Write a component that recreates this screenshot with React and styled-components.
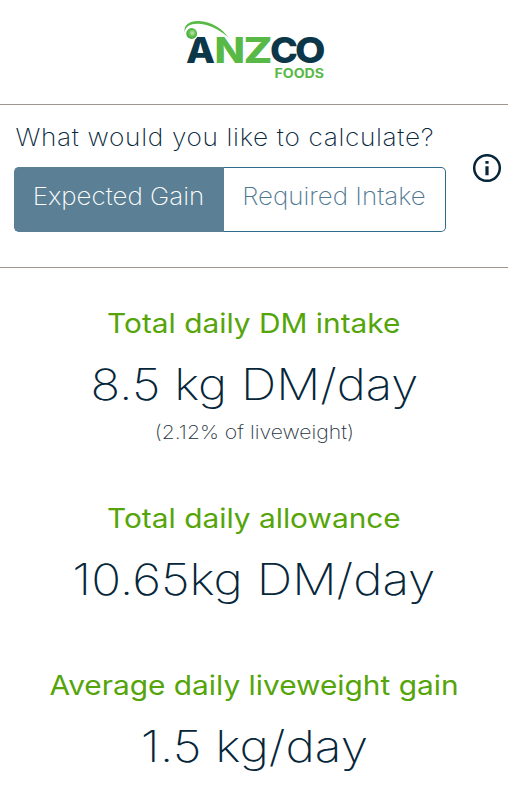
import React, { useState } from 'react';
import styled, { createGlobalStyle } from 'styled-components';

const GlobalStyle = createGlobalStyle`
    body {
        margin: 0;
        background: #fff;
        color: #06263a;
        font-family: Inter, "Liberation Sans", sans-serif;
    }
`;

const Page = styled.div`
    width: 508px;
    height: 800px;
    overflow: hidden;
`;

const Header = styled.header`
    display: flex;
    justify-content: center;
    box-sizing: border-box;
    height: 105px;
    padding-top: 10px;
    border-bottom: 1px solid #a0968d;
`;

const ModePanel = styled.section`
    display: flex;
    justify-content: space-between;
    box-sizing: border-box;
    height: 163px;
    padding: 14px 7px 0 14px;
    border-bottom: 1px solid #a0968d;
`;

const Wide = styled.span`
    display: inline-block;
    transform: scaleX(${({ $scale }) => $scale});
    transform-origin: ${({ $origin }) => $origin || 'center'};
`;

const Question = styled.div`
    width: 432px;
    height: 36px;
    margin-bottom: 12px;
    font-size: 24px;
    line-height: 37px;
    font-weight: 250;
    letter-spacing: 0.6px;
    text-indent: 0.5px;
    white-space: nowrap;
`;

const Toggle = styled.div`
    display: flex;
    width: 432px;
    height: 65px;
`;

const ToggleButton = styled.button`
    box-sizing: border-box;
    flex: 0 0 ${({ $width }) => $width}px;
    padding: 0 2px 6px 0;
    border: 1px solid ${({ $active }) => ($active ? '#5b7f94' : '#2f6c8b')};
    background: ${({ $active }) => ($active ? '#5b7f94' : '#fff')};
    color: ${({ $active }) => ($active ? '#fff' : '#4f7891')};
    font: 250 24px Inter, "Liberation Sans", sans-serif;
    white-space: nowrap;

    &:first-child {
        border-right: 0;
        border-radius: 5px 0 0 5px;
    }

    &:last-child {
        border-left: 0;
        border-radius: 0 5px 5px 0;
    }
`;

const InfoButton = styled.button`
    width: 28px;
    height: 28px;
    margin-top: 35px;
    padding: 0;
    border: 0;
    background: none;
`;

const Results = styled.main`
    padding-top: 36px;
`;

const Result = styled.section`
    display: flex;
    flex-direction: column;
    align-items: center;
    height: ${({ $height }) => $height}px;
    white-space: nowrap;
`;

const ResultTitle = styled.h2`
    margin: 0;
    color: #55a50a;
    font-size: 27px;
    line-height: 40px;
    font-weight: 400;
`;

const ResultValue = styled.div`
    margin-top: 10px;
    font-size: 43px;
    line-height: 60px;
    font-weight: 200;
`;

const ResultNote = styled.div`
    margin-top: 5px;
    color: #26333e;
    font-size: 19px;
    line-height: 28px;
    font-weight: 200;
`;

const results = [
    {
        title: 'Total daily DM intake',
        value: '8.5 kg DM/day',
        note: '(2.12% of liveweight)',
        valueScale: 1.143,
        height: 195,
    },
    {
        title: 'Total daily allowance',
        value: '10.65kg DM/day',
        valueScale: 1.15,
        height: 167,
    },
    {
        title: 'Average daily liveweight gain',
        value: '1.5 kg/day',
        valueScale: 1.155,
        height: 120,
    },
];

const modes = [
    { label: 'Expected Gain', width: 210 },
    { label: 'Required Intake', width: 222 },
];

const Logo = () => (
    <svg width="160" height="80" viewBox="0 0 160 80" fontFamily="Inter, sans-serif" fontWeight="800">
        <defs>
            <radialGradient id="ball" cx="0.55" cy="0.45" r="0.6">
                <stop offset="0" stopColor="#c5e8ad" />
                <stop offset="0.6" stopColor="#58b947" />
                <stop offset="1" stopColor="#3faa39" />
            </radialGradient>
        </defs>
        <g fontSize="35.6">
            <text x="12" y="52.7" textLength="29" lengthAdjust="spacingAndGlyphs" fill="#0b3748">A</text>
            <text x="40.5" y="52.7" textLength="30.5" lengthAdjust="spacingAndGlyphs" fill="#58b947">N</text>
            <text x="69.5" y="52.7" textLength="29" lengthAdjust="spacingAndGlyphs" fill="#58b947">Z</text>
            <text x="96" y="52.7" textLength="28" lengthAdjust="spacingAndGlyphs" fill="#0b3748">C</text>
            <text x="121" y="52.7" textLength="30.5" lengthAdjust="spacingAndGlyphs" fill="#0b3748">O</text>
        </g>
        <circle cx="17.7" cy="23.5" r="6.7" fill="#fff" />
        <circle cx="17.7" cy="23.5" r="5.4" fill="url(#ball)" />
        <path d="M10.5 22C10 15 15 10.8 25 11.1C37 11.5 48 18.5 54.5 27.5C45 19.5 35 14.4 25 13.8C17 13.2 12 16 10.5 22Z" fill="#58b947" />
        <text x="100.5" y="67.7" fontSize="12.8" fontWeight="700" textLength="49.5" lengthAdjust="spacingAndGlyphs" fill="#58b947">FOODS</text>
    </svg>
);

const InfoIcon = () => (
    <svg width="28" height="28" viewBox="0 0 28 28">
        <circle cx="14" cy="14" r="12.8" fill="none" stroke="#06263a" strokeWidth="2.5" />
        <path d="M12.4 7H15.6V9.8H12.4ZM12.4 12.2H15.6V21.2H12.4Z" fill="#06263a" />
    </svg>
);

const App = () => {
    const [mode, setMode] = useState(0);

    return (
        <Page>
            <GlobalStyle />
            <Header>
                <Logo />
            </Header>
            <ModePanel>
                <div>
                    <Question>
                        <Wide $scale={1.093} $origin="left">What would you like to calculate?</Wide>
                    </Question>
                    <Toggle>
                        {modes.map(({ label, width }, index) => (
                            <ToggleButton
                                key={label}
                                $active={mode === index}
                                $width={width}
                                onClick={() => setMode(index)}
                            >
                                <Wide $scale={1.08}>{label}</Wide>
                            </ToggleButton>
                        ))}
                    </Toggle>
                </div>
                <InfoButton aria-label="Info">
                    <InfoIcon />
                </InfoButton>
            </ModePanel>
            <Results>
                {results.map(({ title, value, note, valueScale, height }) => (
                    <Result key={title} $height={height}>
                        <ResultTitle>
                            <Wide $scale={1.105}>{title}</Wide>
                        </ResultTitle>
                        <ResultValue>
                            <Wide $scale={valueScale}>{value}</Wide>
                        </ResultValue>
                        {note && (
                            <ResultNote>
                                <Wide $scale={1.115}>{note}</Wide>
                            </ResultNote>
                        )}
                    </Result>
                ))}
            </Results>
        </Page>
    );
};

export default App;
